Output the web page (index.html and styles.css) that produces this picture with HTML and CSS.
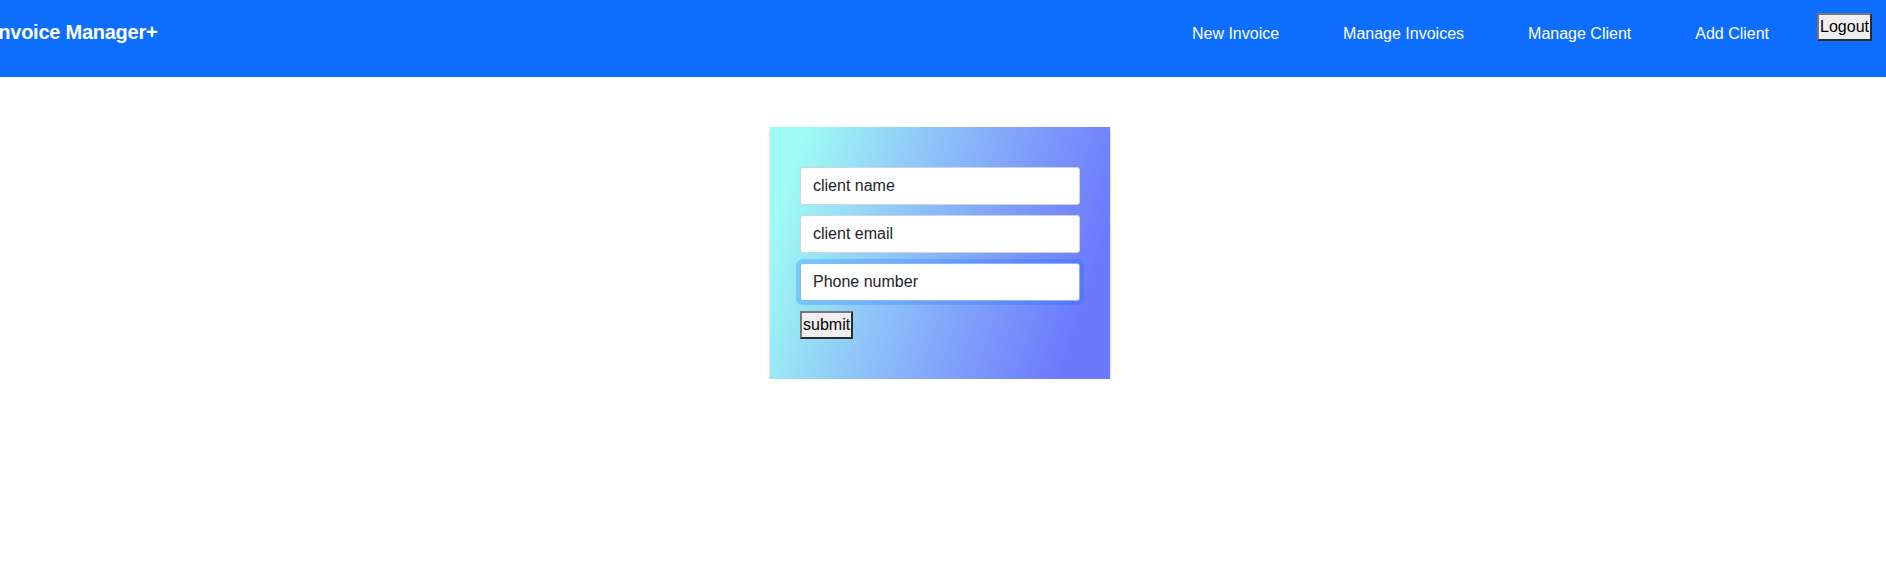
FILE: index.html
```html
<!DOCTYPE html>
<html lang="en">
<head>
<meta charset="utf-8">
<title>Invoice Manager+</title>
<link rel="stylesheet" href="styles.css">
</head>
<body>
<header class="navbar">
  <a class="brand" href="#">Invoice Manager+</a>
  <ul class="nav">
    <li><a class="nav-link" href="#">New Invoice</a></li>
    <li><a class="nav-link" href="#">Manage Invoices</a></li>
    <li><a class="nav-link" href="#">Manage Client</a></li>
    <li><a class="nav-link" href="#">Add Client</a></li>
  </ul>
  <button class="btn logout" type="button">Logout</button>
</header>
<main class="main">
  <form class="card">
    <input class="field" type="text" value="client name">
    <input class="field" type="text" value="client email">
    <input class="field is-focused" type="text" value="Phone number">
    <div class="actions"><button class="btn" type="submit">submit</button></div>
  </form>
</main>
</body>
</html>
```
FILE: styles.css
```css
* { box-sizing: border-box; }
html, body { margin: 0; padding: 0; }
body {
  font-family: "Liberation Sans", Arial, sans-serif;
  font-size: 16px;
  line-height: 1.5;
  color: #212529;
  background: #fff;
  overflow: hidden;
}
.navbar {
  height: 77px;
  background: #0d6efd;
  display: flex;
  align-items: flex-start;
  padding-right: 14px;
}
.brand {
  margin-left: -7px;
  padding-top: 17px;
  font-size: 20px;
  line-height: 30px;
  font-weight: 700;
  letter-spacing: -0.25px;
  color: #fff;
  text-decoration: none;
  white-space: nowrap;
}
.nav {
  display: flex;
  list-style: none;
  margin: 0 0 0 auto;
  padding: 0;
}
.nav-link {
  display: block;
  padding: 21.5px 32px 0;
  line-height: 24px;
  color: #fff;
  text-decoration: none;
  white-space: nowrap;
}
.btn {
  font-family: "Liberation Sans", Arial, sans-serif;
  font-size: 16px;
  line-height: 24px;
  padding: 0 1px;
  margin: 0;
  border-radius: 0;
  border: 2px solid;
  border-color: #767676 #2b2b2b #2b2b2b #767676;
  background: #efefef;
  color: #000;
}
.logout {
  margin-top: 13px;
  margin-left: 16px;
}
.main {
  display: flex;
  justify-content: center;
  padding: 50px 6px 0 0;
}
.card {
  width: 340px;
  padding: 40px 30px;
  display: flex;
  flex-direction: column;
  gap: 10px;
  background: linear-gradient(108deg, #9ffcf4 8%, #8ec3f8 40%, #7d9bfa 65%, #6d79fd 88%);
  box-shadow: 0 2px 3px rgba(0, 0, 0, 0.22);
}
.field {
  display: block;
  width: 100%;
  height: 38px;
  padding: 6px 12px;
  font-family: "Liberation Sans", Arial, sans-serif;
  font-size: 16px;
  line-height: 24px;
  color: #212529;
  background: #fff;
  border: 1px solid #ced4da;
  border-radius: 3px;
  outline: none;
}
.field.is-focused {
  border-color: #86b7fe;
  box-shadow: 0 0 0 4px rgba(13, 110, 253, 0.25);
}
.actions { display: flex; }
```
